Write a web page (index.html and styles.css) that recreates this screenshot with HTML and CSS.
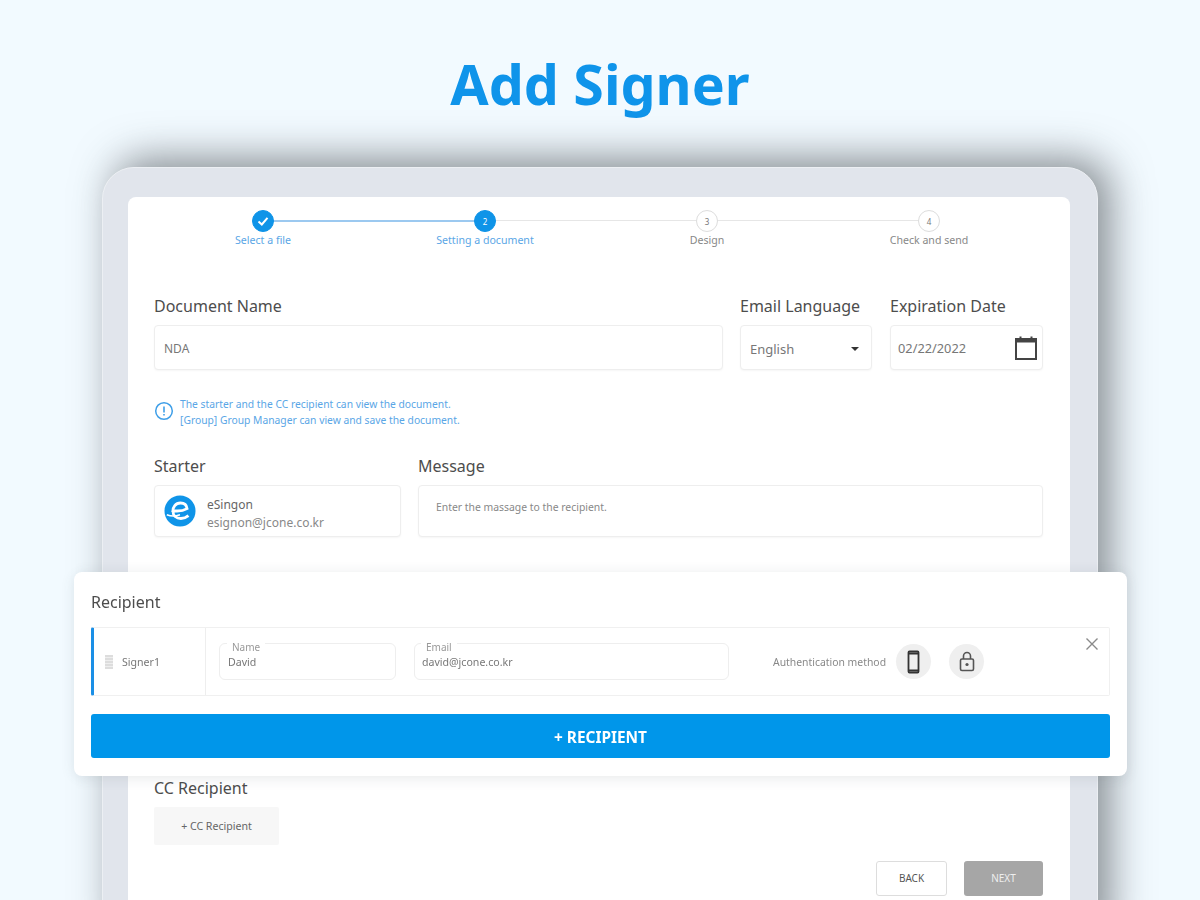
FILE: index.html
```html
<!DOCTYPE html>
<html lang="en">
<head>
  <meta charset="UTF-8" />
  <title>Add Signer</title>
  <link rel="stylesheet" href="styles.css">
</head>
<body>

<h1 class="page-title">Add Signer</h1>

<div class="tablet">
  <div class="screen">

    <div class="stepper">
      <div class="step done">
        <div class="step-dot">
          <svg width="14" height="14" viewBox="0 0 14 14"><path d="M2.5 7.5 L5.8 10.5 L11.5 3.8" fill="none" stroke="#fff" stroke-width="2"/></svg>
        </div>
        <div class="step-label">Select a file</div>
      </div>
      <div class="step active">
        <div class="step-dot">2</div>
        <div class="step-label">Setting a document</div>
      </div>
      <div class="step">
        <div class="step-dot">3</div>
        <div class="step-label">Design</div>
      </div>
      <div class="step">
        <div class="step-dot">4</div>
        <div class="step-label">Check and send</div>
      </div>
    </div>

    <div class="form-row first-row">
      <div class="field grow">
        <div class="field-label">Document Name</div>
        <div class="box input-box">NDA</div>
      </div>
      <div class="field lang">
        <div class="field-label">Email Language</div>
        <div class="box input-box select-box">English <span class="caret"></span></div>
      </div>
      <div class="field expire">
        <div class="field-label">Expiration Date</div>
        <div class="box input-box date-box">02/22/2022
          <svg width="24" height="26" viewBox="0 0 24 26"><rect x="2" y="4" width="20" height="20" fill="none" stroke="#444" stroke-width="2"/><path d="M2 5.5h20" stroke="#444" stroke-width="4"/><path d="M6.5 1.5v4M17.5 1.5v4" stroke="#444" stroke-width="2"/></svg>
        </div>
      </div>
    </div>

    <div class="info">
      <svg width="20" height="20" viewBox="0 0 20 20"><circle cx="10" cy="10" r="8.3" fill="none" stroke="#3f9fe8" stroke-width="1.5"/><path d="M10 5.5v6M10 13v1.6" stroke="#3f9fe8" stroke-width="1.6"/></svg>
      <div>The starter and the CC recipient can view the document.<br>[Group] Group Manager can view and save the document.</div>
    </div>

    <div class="form-row second-row">
      <div class="field starter">
        <div class="field-label">Starter</div>
        <div class="box starter-box">
          <svg width="32" height="32" viewBox="0 0 34 34">
            <circle cx="17" cy="17" r="16.5" fill="#0f94e8"/>
            <path d="M8 16.5 C14 17.5 21 16.5 24.5 14.5 C24 10 20.5 8.5 17.5 8.5 C12 8.5 9.5 13 9.5 17 C9.5 22 13 25 18 25 C21 25 23.5 24 26 22" fill="none" stroke="#fff" stroke-width="3"/>
            <path d="M3 21 C10 24 14 22 17 21" fill="none" stroke="#fff" stroke-width="1.6"/>
          </svg>
          <div class="starter-text">
            <div class="starter-name">eSingon</div>
            <div class="starter-mail">esignon@jcone.co.kr</div>
          </div>
        </div>
      </div>
      <div class="field grow">
        <div class="field-label">Message</div>
        <div class="box message-box">Enter the massage to the recipient.</div>
      </div>
    </div>

    <div class="recipient-card">
      <div class="field-label recipient-title">Recipient</div>
      <div class="recipient-row">
        <div class="signer-cell">
          <span class="handle"></span>
          Signer1
        </div>
        <div class="float-field name-field">
          <span class="float-label">Name</span>
          David
        </div>
        <div class="float-field email-field">
          <span class="float-label">Email</span>
          david@jcone.co.kr
        </div>
        <div class="auth-label">Authentication method</div>
        <div class="auth-btn">
          <svg width="13" height="24" viewBox="0 0 13 24"><rect x="1.5" y="1.5" width="10" height="21" rx="1" fill="none" stroke="#333" stroke-width="1.8"/><path d="M1.5 3.5h10M1.5 20.5h10" stroke="#333" stroke-width="2"/></svg>
        </div>
        <div class="auth-btn second">
          <svg width="16" height="21" viewBox="0 0 16 21"><rect x="1.5" y="8" width="13" height="11.5" rx="1.5" fill="none" stroke="#555" stroke-width="1.6"/><path d="M4.5 8V5a3.5 3.5 0 0 1 7 0v3" fill="none" stroke="#555" stroke-width="1.6"/><circle cx="8" cy="13.5" r="1.6" fill="#555"/></svg>
        </div>
        <svg class="row-close" width="14" height="14" viewBox="0 0 14 14"><path d="M1.5 1.5l11 11M12.5 1.5l-11 11" stroke="#8a8a8a" stroke-width="1.4"/></svg>
      </div>
      <div class="add-recipient">+ RECIPIENT</div>
    </div>

    <div class="field-label cc-title">CC Recipient</div>
    <div class="cc-btn">+ CC Recipient</div>

    <div class="actions">
      <div class="btn-back">BACK</div>
      <div class="btn-next">NEXT</div>
    </div>

  </div>
</div>

</body>
</html>
```

FILE: styles.css
```css
* {
  box-sizing: border-box;
}

html, body {
  margin: 0;
  padding: 0;
  height: 900px;
  overflow: hidden;
  background: #f2faff;
  font-family: "Noto Sans", sans-serif;
  color: #444;
}

.page-title {
  margin: 0;
  padding-top: 49px;
  height: 122px;
  line-height: 70px;
  font-family: "Noto Sans", sans-serif;
  font-size: 55.5px;
  font-weight: 700;
  text-align: center;
  color: #0f94ea;
  filter: blur(0.5px);
}

/* runs past the bottom of the picture, so the shadow doesn't fade out */
.tablet {
  width: 996px;
  height: 790px;
  margin: 45px auto 0;
  padding: 29px 27px 0 25px;
  background: #e1e5ec;
  border: 1px solid #eceff3;
  border-radius: 32px;
  box-shadow: 12px -8px 40px rgba(60, 65, 70, 0.6);
  filter: blur(0.4px);
}

.screen {
  height: 740px;
  padding: 0 27px 0 26px;
  background: #fff;
  border-radius: 8px;
}

/* stepper */
.stepper {
  display: grid;
  grid-template-columns: repeat(4, 222px);
  margin-left: -2px;
  padding-top: 13px;
}

.step {
  position: relative;
  display: flex;
  flex-direction: column;
  align-items: center;
}

.step:not(:last-child)::after {
  content: '';
  position: absolute;
  top: 10px;
  left: 50%;
  width: 100%;
  height: 1px;
  background: #e6e6e6;
}

.step.done::after {
  height: 2px;
  background: #9cc9f0;
}

.step-dot {
  position: relative;
  z-index: 1;
  display: flex;
  align-items: center;
  justify-content: center;
  width: 22px;
  height: 22px;
  border: 1px solid #ddd;
  border-radius: 50%;
  background: #fff;
  font-size: 8px;
  color: #777;
}

.step.done .step-dot,
.step.active .step-dot {
  background: #0f94e8;
  border-color: #0f94e8;
  color: #fff;
}

.step-label {
  margin-top: 1px;
  line-height: 14px;
  font-size: 10.6px;
  color: #888;
}

.step.done .step-label,
.step.active .step-label {
  color: #5aa6e6;
}

/* form */
.form-row {
  display: flex;
  gap: 17px;
}

.first-row {
  margin-top: 48px;
}

.second-row {
  margin-top: 27px;
}

.grow {
  flex: 1;
}

.lang {
  width: 132px;
}

.expire {
  width: 153px;
  margin-left: 1px;
}

.starter {
  width: 247px;
}

.field-label {
  height: 20px;
  margin-bottom: 10px;
  line-height: 22px;
  font-size: 16px;
  color: #4d4d4d;
}

.box {
  border: 1px solid #eee;
  border-radius: 4px;
  background: #fff;
  box-shadow: 0 1px 2px rgba(0, 0, 0, 0.04);
}

.input-box {
  display: flex;
  align-items: center;
  height: 45px;
  padding: 2px 9px 0;
  font-size: 12px;
  color: #777;
}

.select-box {
  justify-content: space-between;
  padding-right: 12px;
  font-size: 13px;
}

.caret {
  width: 0;
  height: 0;
  border-left: 4.5px solid transparent;
  border-right: 4.5px solid transparent;
  border-top: 4.5px solid #333;
}

.date-box {
  justify-content: space-between;
  padding: 0 4px 0 7px;
  font-size: 12.8px;
}

.info {
  display: flex;
  align-items: center;
  gap: 6px;
  margin-top: 26px;
  line-height: 16px;
  font-size: 10.3px;
  color: #5aa6e6;
}

.info svg {
  margin-bottom: 2px;
}

.starter-box {
  display: flex;
  align-items: center;
  gap: 11px;
  height: 52px;
  padding: 0 9px;
  font-size: 12px;
  line-height: 18px;
}

.starter-text {
  padding-top: 6px;
}

.starter-name {
  color: #666;
}

.starter-mail {
  color: #888;
}

.message-box {
  display: flex;
  align-items: center;
  height: 52px;
  padding: 0 17px 8px;
  font-size: 10.4px;
  color: #888;
}

/* recipient card, wider than the screen it sits on */
.recipient-card {
  position: relative;
  margin: 35px -84px 0 -80px;
  padding: 19px 17px 18px;
  background: #fff;
  border-radius: 8px;
  box-shadow: 0 2px 14px rgba(60, 70, 80, 0.12);
}

.recipient-title {
  margin-bottom: 16px;
}

.recipient-row {
  position: relative;
  display: flex;
  align-items: center;
  height: 69px;
  border: 1px solid #f0f0f0;
  border-left: 3px solid #1a8fe6;
  border-radius: 2px;
  font-size: 10.6px;
  color: #777;
}

.signer-cell {
  display: flex;
  align-items: center;
  gap: 9px;
  align-self: stretch;
  width: 112px;
  padding-left: 11px;
  border-right: 1px solid #eee;
}

.handle {
  width: 8px;
  height: 14px;
  background: repeating-linear-gradient(#ddd 0 2px, #eee 2px 3px);
}

.float-field {
  position: relative;
  display: flex;
  align-items: center;
  height: 37px;
  padding-left: 8px;
  border: 1px solid #eee;
  border-radius: 6px;
}

.float-label {
  position: absolute;
  top: -2px;
  left: 7px;
  padding: 0 5px;
  line-height: 11px;
  font-size: 10px;
  background: #fff;
  color: #999;
}

.name-field {
  width: 177px;
  margin-left: 13px;
}

.email-field {
  width: 315px;
  margin-left: 18px;
  padding-left: 7px;
}

.email-field .float-label {
  left: 6px;
}

.auth-label {
  width: 114px;
  margin-left: 44px;
  white-space: nowrap;
  font-size: 10.4px;
  color: #888;
}

.auth-btn {
  display: flex;
  align-items: center;
  justify-content: center;
  width: 35px;
  height: 35px;
  margin-left: 9px;
  border-radius: 50%;
  background: #efefef;
}

.auth-btn.second {
  margin-left: 18px;
}

.row-close {
  position: absolute;
  top: 9px;
  right: 10px;
}

.add-recipient {
  height: 44px;
  margin-top: 18px;
  border-radius: 3px;
  background: #0096ea;
  line-height: 47px;
  text-align: center;
  font-size: 15.4px;
  font-weight: 700;
  color: #fff;
}

/* bottom */
.cc-title {
  margin-top: 1px;
}

.cc-btn {
  width: 125px;
  height: 38px;
  background: #f7f7f7;
  border-radius: 2px;
  line-height: 38px;
  text-align: center;
  font-size: 10.6px;
  color: #666;
}

.actions {
  display: flex;
  justify-content: flex-end;
  gap: 17px;
  margin-top: 16px;
}

.btn-back,
.btn-next {
  height: 35px;
  line-height: 35px;
  text-align: center;
  font-size: 10px;
  border-radius: 3px;
}

.btn-back {
  width: 71px;
  line-height: 33px;
  border: 1px solid #ddd;
  background: #fff;
  color: #555;
}

.btn-next {
  width: 79px;
  background: #a6a6a6;
  color: #eee;
}
```
